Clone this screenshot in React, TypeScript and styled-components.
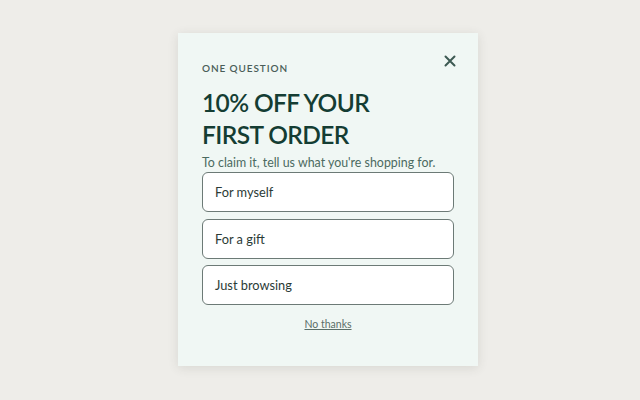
import { FC } from "react"
import styled, { createGlobalStyle } from "styled-components"

const GlobalStyle = createGlobalStyle`
  html, body {
    margin: 0;
    padding: 0;
    background: #eeede9;
  }
  body {
    font-family: "Lato", "Liberation Sans", sans-serif;
  }
`

const Page = styled.div`
  width: 640px;
  height: 400px;
  display: flex;
  justify-content: center;
  align-items: flex-start;
  padding: 33px 0 0 16px;
  box-sizing: border-box;
`

const Card = styled.div`
  position: relative;
  width: 300px;
  height: 333px;
  box-sizing: border-box;
  padding: 29px 24px 0 24px;
  background: #f0f7f4;
  box-shadow: 0 2px 10px rgba(60, 60, 50, 0.12);
  display: flex;
  flex-direction: column;
`

const CloseButton = styled.button`
  position: absolute;
  top: 20px;
  right: 20px;
  width: 16px;
  height: 16px;
  padding: 0;
  border: none;
  background: transparent;
  display: flex;
  align-items: center;
  justify-content: center;
  cursor: pointer;
`

const Eyebrow = styled.div`
  font-size: 10px;
  font-weight: 600;
  letter-spacing: 0.9px;
  color: #4a5e58;
  line-height: 12px;
`

const Headline = styled.h1`
  margin: 13px 0 0 0;
  font-size: 24.5px;
  font-weight: 600;
  line-height: 32px;
  letter-spacing: -0.6px;
  color: #143d33;
`

const Lead = styled.p`
  margin: 4px 0 0 0;
  font-size: 12.4px;
  line-height: 16px;
  color: #4b6a60;
`

const Options = styled.div`
  display: flex;
  flex-direction: column;
  gap: 6.5px;
  margin-top: 1px;
`

const Option = styled.button`
  height: 40px;
  box-sizing: border-box;
  border: 1px solid #6c7a76;
  border-radius: 6px;
  background: #ffffff;
  padding: 0 12px;
  text-align: left;
  font-family: inherit;
  font-size: 12.8px;
  color: #2b3b36;
  cursor: pointer;
`

const Dismiss = styled.button`
  align-self: center;
  margin-top: 13px;
  border: none;
  background: transparent;
  padding: 0;
  font-family: inherit;
  font-size: 10.5px;
  color: #5a6e68;
  text-decoration: underline;
  cursor: pointer;
`

const choices = ["For myself", "For a gift", "Just browsing"]

const App: FC = () => {
  return (
    <>
      <GlobalStyle />
      <Page>
        <Card>
          <CloseButton aria-label="Close">
            <svg width="12" height="12" viewBox="0 0 12 12">
              <path d="M1.5 1.5 L10.5 10.5 M10.5 1.5 L1.5 10.5" stroke="#3d5a52" strokeWidth="2" strokeLinecap="round" />
            </svg>
          </CloseButton>
          <Eyebrow>ONE QUESTION</Eyebrow>
          <Headline>10% OFF YOUR<br />FIRST ORDER</Headline>
          <Lead>To claim it, tell us what you're shopping for.</Lead>
          <Options>
            {choices.map((c) => (
              <Option key={c}>{c}</Option>
            ))}
          </Options>
          <Dismiss>No thanks</Dismiss>
        </Card>
      </Page>
    </>
  )
}

export default App
